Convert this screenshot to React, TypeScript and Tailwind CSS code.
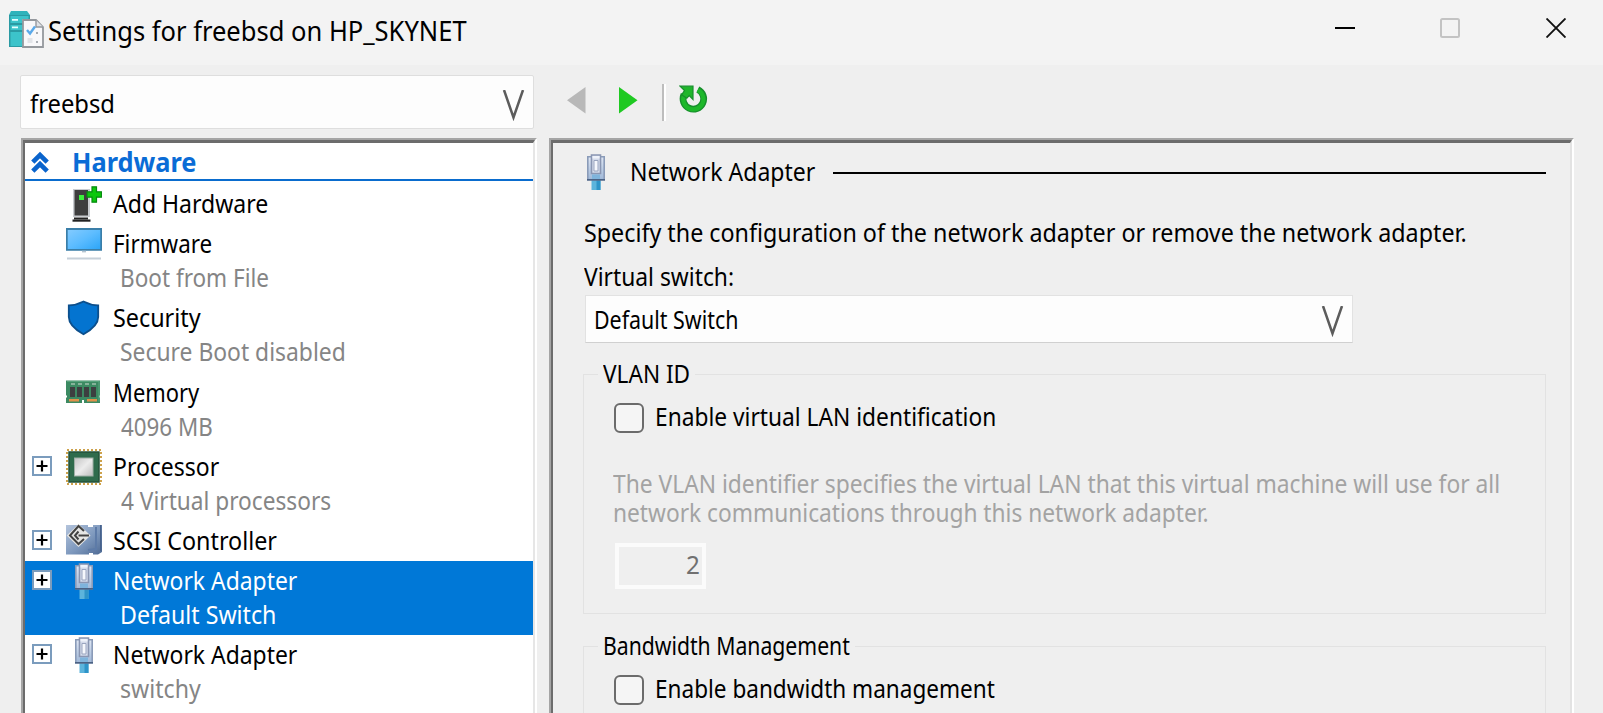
import { useLayoutEffect, useRef, type ReactNode } from "react";

/** One line of text, condensed or stretched horizontally to fill `w` pixels. */
function Label({ w, children, className = "" }: { w: number; children: string; className?: string }) {
  const ref = useRef<HTMLSpanElement>(null);
  useLayoutEffect(() => {
    const el = ref.current;
    if (el) el.style.transform = `scaleX(${w / el.offsetWidth})`;
  }, [w]);
  return (
    <span className={`block whitespace-nowrap ${className}`} style={{ width: w }}>
      <span ref={ref} className="inline-block origin-left whitespace-nowrap">
        {children}
      </span>
    </span>
  );
}

function AppIcon() {
  return (
    <svg width="36" height="38" viewBox="0 0 36 38">
      <path d="M3 1h16l3 4v32H1V5z" fill="#2fb3bb" />
      <path d="M1 5h21v32H1z" fill="#2a9aa3" />
      <path d="M2.5 6h18v7h-18zM2.5 15h18v5h-18zM2.5 22h18v14h-18z" fill="#3cc3ca" />
      <path d="M4 9h6v1.8H4zM14 9h4v1.8h-4zM4 16.5h6v1.8H4z" fill="#e6ffff" />
      <path d="M15 10h13l7 7v20H15z" fill="#f8f8fa" stroke="#94989d" strokeWidth="1.8" />
      <path d="M28 10v7h7" fill="#dfe2e6" stroke="#94989d" strokeWidth="1.4" />
      <path d="M19 20l3 3.5 5-7" fill="none" stroke="#5aa9ea" strokeWidth="2.4" />
      <path d="M19.500 28h5v5h-5z" fill="#e2e4e8" />
      <path d="M28 22h2v2h-2zM28 31h2v2h-2z" fill="#a6abb2" />
    </svg>
  );
}

function AddHardwareIcon() {
  return (
    <svg width="36" height="36" viewBox="0 0 36 36">
      <path d="M7 3h17v28H7z" fill="#c9ccd0" />
      <path d="M8.5 4h13.5v25.5H8.5z" fill="#3e3e3e" />
      <path d="M8 31.5h14v2H8z" fill="#222" />
      <path d="M6.500 33.5h18v2.2h-18z" fill="#222" />
      <path d="M13 9h5v5h-5z" fill="#3cf03c" />
      <path d="M26 .8h4.500v5h5v5.400h-5v5H26v-5h-5V5.800h5z" fill="#0cc80c" stroke="#078a10" strokeWidth="1.2" />
    </svg>
  );
}

function MonitorIcon() {
  return (
    <svg width="36" height="36" viewBox="0 0 36 36">
      <defs>
        <linearGradient id="screen" x1="0" y1="0" x2="1" y2="1">
          <stop offset="0" stopColor="#86ccff" />
          <stop offset=".5" stopColor="#5cbcff" />
          <stop offset="1" stopColor="#2aa4f8" />
        </linearGradient>
      </defs>
      <path d="M.8 3h34.400v20.800H.8z" fill="url(#screen)" stroke="#3a7ea8" strokeWidth="1.800" />
      <path d="M16 24.800h4v1.600h-4z" fill="#b6c4d0" />
      <path d="M1 31.500h34v2H1z" fill="#c6d0d9" />
    </svg>
  );
}

function ShieldIcon() {
  return (
    <svg width="36" height="36" viewBox="0 0 36 36">
      <path
        d="M17.500 1.500C13.500 3.500 8 5.300 2.800 5.400V17c0 7 7 13 14.700 17.300C25.200 30 32.200 24 32.200 17V5.400C27 5.300 21.500 3.500 17.500 1.500z"
        fill="#0474d0"
        stroke="#0c4f8c"
        strokeWidth="1.800"
      />
    </svg>
  );
}

function MemoryIcon() {
  return (
    <svg width="36" height="36" viewBox="0 0 36 36">
      <path d="M0 5.500h34v15h-1v2h1V28H18v-3h-2v3H0v-5.500h1v-2H0z" fill="#3c8a62" />
      <path d="M1 6.500h32v20" fill="none" stroke="#57a37c" strokeWidth="1.200" />
      <path d="M4 12h5v10H4zM11 12h5v10h-5zM18 12h5v10h-5zM25 12h5v10h-5z" fill="#3d3f40" />
      <path d="M5 8h4v2H5zM12 8h4v2h-4zM19 8h4v2h-4zM26 8h4v2h-4z" fill="#86b39a" />
      <path d="M3 24h10v2.400H3zM21 24h10v2.400H21z" fill="#e0914a" />
    </svg>
  );
}

function ProcessorIcon() {
  return (
    <svg width="36" height="36" viewBox="0 0 36 36">
      <defs>
        <linearGradient id="die" x1="0" y1="0" x2="1" y2="1">
          <stop offset="0" stopColor="#c4c4c4" />
          <stop offset=".5" stopColor="#ececec" />
          <stop offset="1" stopColor="#bdbdbd" />
        </linearGradient>
      </defs>
      <rect x="1" y="1" width="34" height="34" fill="none" stroke="#cda24c" strokeWidth="2" strokeDasharray="2 2" />
      <rect x="3" y="3" width="30" height="30" fill="#2f6b4c" stroke="#245239" strokeWidth="1.500" />
      <rect x="8.500" y="9" width="18.500" height="18" fill="url(#die)" stroke="#9fb0a6" strokeWidth="1" />
    </svg>
  );
}

function ScsiIcon() {
  return (
    <svg width="36" height="36" viewBox="0 0 36 36">
      <defs>
        <linearGradient id="disk" x1="0" y1="0" x2="1" y2="1">
          <stop offset="0" stopColor="#b4c4dc" />
          <stop offset=".55" stopColor="#7d98bd" />
          <stop offset="1" stopColor="#4e6a94" />
        </linearGradient>
      </defs>
      <path d="M0 2h22v2h5V2h9v27l-4 2.500h-5V30h-4v1.500H0z" fill="url(#disk)" />
      <path d="M30 4v22l-8 1" fill="none" stroke="#5d7ba8" strokeWidth="2" />
      <path d="M34.800 2v26" stroke="#47628c" strokeWidth="1.600" />
      <path d="M12.500 1L24.500 12.500 12.500 24 .8 12.500z" fill="#e6e6e4" />
      <path
        d="M18 8l-5.500-5L4 12.500l8.500 8.500 5.500-5M12.500 12.500H23M12.500 8.500l-3.500 4 3.500 4"
        fill="none"
        stroke="#424242"
        strokeWidth="2"
      />
    </svg>
  );
}

function AdapterIcon() {
  return (
    <svg width="36" height="36" viewBox="0 0 36 36">
      <defs>
        <linearGradient id="plug" x1="0" y1="0" x2="0" y2="1">
          <stop offset="0" stopColor="#dfe6f3" />
          <stop offset="1" stopColor="#9fb8d8" />
        </linearGradient>
      </defs>
      <path d="M13.500 26h9v10h-9z" fill="#5cb4dc" />
      <path d="M18.500 26h4v10h-4z" fill="#2e94c8" />
      <path d="M9.800 2.800h16.400v23H9.800z" fill="url(#plug)" stroke="#8a9bb8" strokeWidth="1.600" />
      <path d="M13.500 1h9v18.500h-9z" fill="#d3daea" stroke="#8a96b2" strokeWidth="1.600" />
      <path d="M16 6.500h4V17h-4z" fill="#f6f8fd" stroke="#9aa5bf" strokeWidth="1" />
      <path d="M14.500 2h7v2.500h-7z" fill="#eef2fa" />
      <path d="M9 25h18v1.600H9z" fill="#4b6284" />
      <path d="M14 20.500h8V25h-8z" fill="#7fb4dc" />
    </svg>
  );
}

function DropArrow() {
  return (
    <svg width="23" height="31" viewBox="0 0 23 31">
      <path d="M2 0L11.500 27.500 21 0" fill="none" stroke="#5c5c5c" strokeWidth="2.500" />
    </svg>
  );
}

function Expander() {
  return (
    <span className="grid size-5 place-items-center border-2 border-[#7b9cbd] bg-white">
      <svg width="12" height="12" viewBox="0 0 12 12">
        <path d="M6 0.500v11M.5 6h11" stroke="#000" strokeWidth="2.200" />
      </svg>
    </span>
  );
}

type Item = {
  icon: ReactNode;
  title: string;
  titleW: number;
  detail?: string;
  detailW?: number;
  detailPad?: string;
  height: string;
  expandable?: boolean;
  selected?: boolean;
};

const items: Item[] = [
  { icon: <AddHardwareIcon />, title: "Add Hardware", titleW: 155, height: "h-[40.5px]" },
  { icon: <MonitorIcon />, title: "Firmware", titleW: 99, detail: "Boot from File", detailW: 149, height: "h-[74px]" },
  { icon: <ShieldIcon />, title: "Security", titleW: 88, detail: "Secure Boot disabled", detailW: 226, height: "h-[74.5px]" },
  { icon: <MemoryIcon />, title: "Memory", titleW: 86, detail: "4096 MB", detailW: 92, detailPad: "pl-[8px]", height: "h-[74px]" },
  { icon: <ProcessorIcon />, title: "Processor", titleW: 106, detail: "4 Virtual processors", detailW: 210, detailPad: "pl-[8px]", height: "h-[74px]", expandable: true },
  { icon: <ScsiIcon />, title: "SCSI Controller", titleW: 164, height: "h-10", expandable: true },
  { icon: <AdapterIcon />, title: "Network Adapter", titleW: 184, detail: "Default Switch", detailW: 156, height: "h-[74px]", expandable: true, selected: true },
  { icon: <AdapterIcon />, title: "Network Adapter", titleW: 184, detail: "switchy", detailW: 81, height: "h-[78px]", expandable: true },
];

function TreeItem({ item }: { item: Item }) {
  return (
    <div className={`flex shrink-0 ${item.height} ${item.selected ? "bg-[#0078d7] text-white" : "text-black"}`}>
      <div className="w-10 shrink-0 pt-[8.5px] pl-[7px]">{item.expandable && <Expander />}</div>
      <div className="w-12 shrink-0 pt-[1.5px] pl-[0.5px]">{item.icon}</div>
      <div className="pt-[1.5px] leading-[34px]">
        <Label w={item.titleW}>{item.title}</Label>
        {item.detail && item.detailW && (
          <div className={`${item.detailPad ?? "pl-[7px]"} ${item.selected ? "" : "text-[#858585]"}`}>
            <Label w={item.detailW}>{item.detail}</Label>
          </div>
        )}
      </div>
    </div>
  );
}

function Checkbox({ label, w }: { label: string; w: number }) {
  return (
    <label className="flex items-start gap-[11px]">
      <span className="size-[30px] rounded-[6px] border-2 border-[#6b6b6b] bg-[#f5f5f5]" />
      <span className="-mt-1 leading-[34px]">
        <Label w={w}>{label}</Label>
      </span>
    </label>
  );
}

export default function App() {
  return (
    <div className="flex h-[713px] w-[1603px] flex-col overflow-hidden bg-[#efefef] font-['Noto_Sans','Open_Sans',sans-serif] text-[26px] text-black">
      <header className="flex h-[65px] shrink-0 items-start bg-[#f3f3f3] pl-2">
        <div className="pt-2.5">
          <AppIcon />
        </div>
        <div className="pt-[14px] pl-[4px] text-[26.5px] leading-[34px]">
          <Label w={419}>Settings for freebsd on HP_SKYNET</Label>
        </div>
        <div className="ml-auto flex items-center gap-[86px] pt-[18px] pr-[37px]">
          <svg className="-mr-px" width="20" height="20" viewBox="0 0 20 20">
            <path d="M0 10h20" stroke="#000" strokeWidth="2" />
          </svg>
          <svg width="20" height="20" viewBox="0 0 20 20">
            <rect x="1" y="1" width="18" height="18" rx="1.500" fill="none" stroke="#c3c3c3" strokeWidth="2" />
          </svg>
          <svg width="20" height="20" viewBox="0 0 20 20">
            <path d="M.5.5l19 19M19.500.5l-19 19" stroke="#111" strokeWidth="1.900" />
          </svg>
        </div>
      </header>

      <div className="flex min-h-0 flex-1">
        <aside className="ml-5 flex w-[517px] shrink-0 flex-col pt-2.5">
          <div className="flex h-[54px] w-[514px] shrink-0 items-start justify-between rounded-[2px] border border-[#dedede] bg-[#fdfdfd] pt-2.5 pr-2 pl-[8.5px] leading-[34px]">
            <Label w={85}>freebsd</Label>
            <div className="pt-1">
              <DropArrow />
            </div>
          </div>
          <div className="mt-[9px] ml-px flex min-h-0 flex-1 border-t-2 border-l-2 border-[#a5a5a5] border-r-2 border-r-white">
            <div className="flex min-w-0 flex-1 flex-col overflow-hidden border-t-[3px] border-r-2 border-l-2 border-[#6c6c6c] border-r-[#e6e6e6] bg-white">
              <div className="flex h-[38px] shrink-0 items-start border-b-2 border-[#0a6cce]">
                <svg className="mt-[8px] ml-[6px]" width="18" height="22" viewBox="0 0 18 22">
                  <path d="M1.800 11.200L9 4l7.200 7.200M1.800 20.200L9 13l7.200 7.200" fill="none" stroke="#0a64cc" strokeWidth="4.600" />
                </svg>
                <div className="pt-[1.5px] pl-[23px] leading-[34px] font-bold text-[#0a6cd6]">
                  <Label w={124}>Hardware</Label>
                </div>
              </div>
              <div className="flex flex-col pt-[3px]">
                {items.map((item, i) => (
                  <TreeItem key={i} item={item} />
                ))}
              </div>
            </div>
          </div>
        </aside>

        <main className="ml-3 flex w-[1025px] shrink-0 flex-col">
          <div className="flex h-[73px] shrink-0 items-start pt-[19px] pl-[18px]">
            <svg className="mt-[3px]" width="19" height="27" viewBox="0 0 19 27">
              <path d="M18.500 0v26.500L0 13.300z" fill="#b8b8b8" />
            </svg>
            <svg className="mt-[3px] ml-[33px]" width="19" height="27" viewBox="0 0 19 27">
              <path d="M0 0v26.500L18.500 13.300z" fill="#1fc922" />
            </svg>
            <div className="ml-6 h-[37px] w-1 border-r-2 border-l-2 border-r-white border-l-[#bdbdbd]" />
            <svg className="mt-px ml-[13px]" width="29" height="29" viewBox="0 0 29 29">
              <path d="M18.800 4.500A10.300 10.300 0 1 1 5 9.500" fill="none" stroke="#178f2c" strokeWidth="6.800" />
              <path d="M18.800 5.200A10.100 10.100 0 1 1 5.200 10" fill="none" stroke="#1db82a" strokeWidth="4.200" />
              <path d="M1 1.200h13v13.300l-3.800-3.800-2.400 2.600-5.200-3.500 2.900-4.200z" fill="#1fb62b" stroke="#178f2c" strokeWidth="1.200" />
            </svg>
          </div>

          <section className="flex min-h-0 flex-1 border-t-2 border-r-2 border-l-2 border-[#a5a5a5] border-r-white">
            <div className="flex min-w-0 flex-1 flex-col overflow-hidden border-t-[3px] border-r-2 border-l-2 border-[#6c6c6c] border-r-[#e3e3e3] pr-[25px] pl-[30px]">
              <div className="flex h-[72px] shrink-0 items-start">
                <div className="-ml-[5px] pt-[11px]">
                  <AdapterIcon />
                </div>
                <div className="pt-[11px] pl-[16px] leading-[34px]">
                  <Label w={185}>Network Adapter</Label>
                </div>
                <div className="-mr-px mt-[29px] ml-[18px] h-[2px] flex-1 bg-black" />
              </div>
              <div className="shrink-0 pl-px leading-[34px]">
                <Label w={883}>Specify the configuration of the network adapter or remove the network adapter.</Label>
              </div>
              <div className="mt-[10px] shrink-0 pl-px leading-[34px]">
                <Label w={150}>Virtual switch:</Label>
              </div>
              <div className="mt-[2px] ml-[2px] flex h-[48px] w-[768px] shrink-0 items-start justify-between border border-[#e2e2e2] border-b-[#d0d0d0] bg-[#fdfdfd] pt-[6px] pr-[8px] pl-[8px] leading-[34px]">
                <Label w={144}>Default Switch</Label>
                <div className="pt-1">
                  <DropArrow />
                </div>
              </div>

              <fieldset className="mt-[14px] -mr-px h-[257px] shrink-0 border border-[#e2e2e2] pl-[30px]">
                <legend className="-ml-4 h-[34px] px-[5px] leading-[32px]">
                  <Label w={87}>VLAN ID</Label>
                </legend>
                <div className="pt-3">
                  <Checkbox label="Enable virtual LAN identification" w={341} />
                </div>
                <div className="mt-[36px] -ml-px leading-[29px] text-[#a3a3a3]">
                  <Label w={887}>The VLAN identifier specifies the virtual LAN that this virtual machine will use for all</Label>
                  <Label w={596}>network communications through this network adapter.</Label>
                </div>
                <div className="mt-4 ml-px flex h-[46px] w-[91px] items-start justify-end border-4 border-[#fbfbfb] pr-[2px] leading-[34px] text-[#707070]">
                  <Label w={14}>2</Label>
                </div>
              </fieldset>

              <fieldset className="mt-[15px] -mr-px h-[200px] shrink-0 border border-[#e2e2e2] pl-[30px]">
                <legend className="-ml-4 h-[34px] px-[5px] leading-[32px]">
                  <Label w={247}>Bandwidth Management</Label>
                </legend>
                <div className="pt-3">
                  <Checkbox label="Enable bandwidth management" w={340} />
                </div>
              </fieldset>
            </div>
          </section>
        </main>
      </div>
    </div>
  );
}
